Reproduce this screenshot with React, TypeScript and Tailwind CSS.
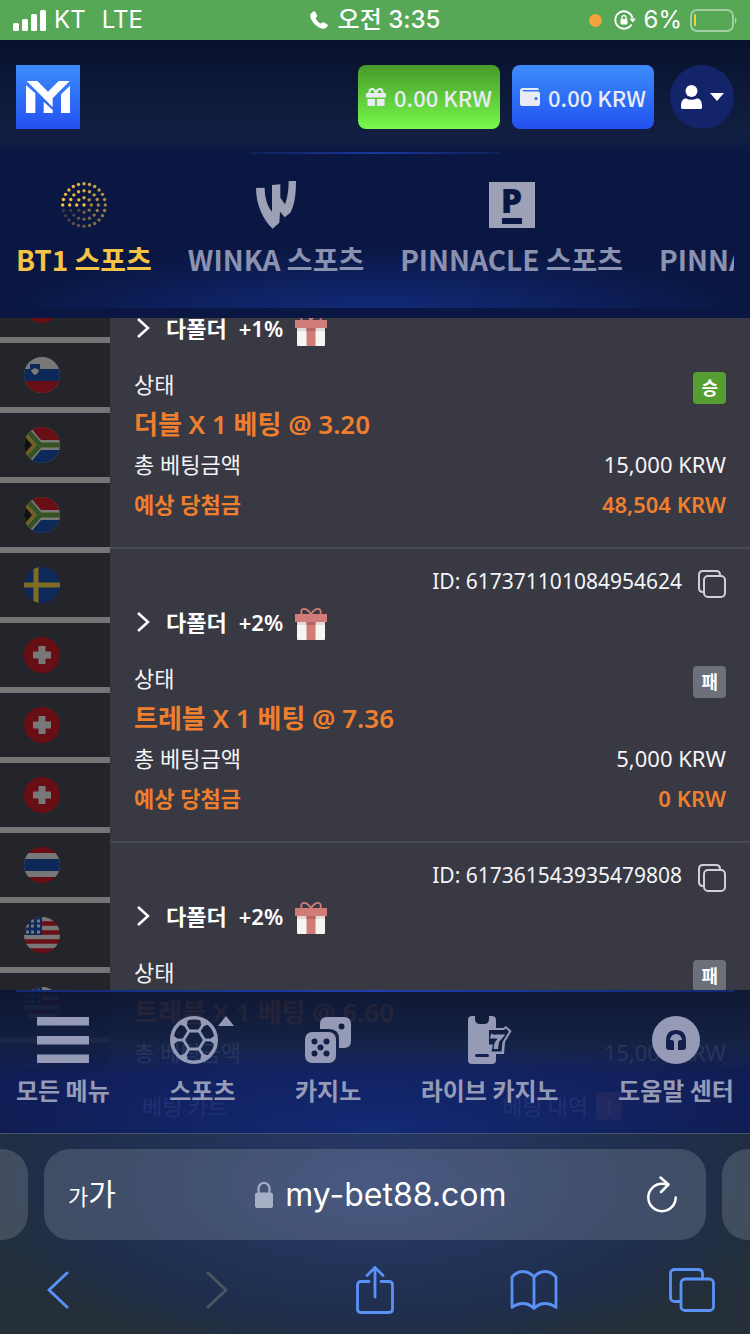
import type { ReactNode } from 'react';

type Bet = {
  id: string;
  bonus: string;
  title: string;
  stake: string;
  payout: string;
  won: boolean;
};

const bets: Bet[] = [
  { id: '617373820194837712', bonus: '+1%', title: '더블 X 1 베팅 @ 3.20', stake: '15,000 KRW', payout: '48,504 KRW', won: true },
  { id: '617371101084954624', bonus: '+2%', title: '트레블 X 1 베팅 @ 7.36', stake: '5,000 KRW', payout: '0 KRW', won: false },
  { id: '617361543935479808', bonus: '+2%', title: '트레블 X 1 베팅 @ 6.60', stake: '15,000 KRW', payout: '0 KRW', won: false },
];

const countries = ['red', 'si', 'za', 'za', 'se', 'ch', 'ch', 'ch', 'th', 'us', 'us', 'us'];

function Flag({ code }: { code: string }) {
  return (
    <svg viewBox="0 0 36 36" className="size-9 rounded-full brightness-50">
      <rect width="36" height="36" fill={code === 'za' || code === 'si' ? '#f0f0f0' : '#d01c2a'} />
      {code === 'si' && (
        <>
          <path d="M0 12H36V24H0Z" fill="#1a52b0" />
          <path d="M0 24H36V36H0Z" fill="#d01c2a" />
          <path d="M6 7H16V12Q16 17 11 18Q6 17 6 12Z" fill="#1a52b0" />
          <path d="M7 13L11 11L15 13Q14 17 11 18Q8 17 7 13Z" fill="#f0f0f0" />
        </>
      )}
      {code === 'za' && (
        <>
          <path d="M6 0H36V13H17Z" fill="#d01c2a" />
          <path d="M6 36H36V23H17Z" fill="#1a52b0" />
          <path d="M-2 4L10 18L-2 32" fill="#222" stroke="#e8b93c" strokeWidth="3" />
          <path d="M1 1L16 18H36M1 35L16 18" fill="none" stroke="#6da544" strokeWidth="5" />
        </>
      )}
      {code === 'se' && (
        <>
          <rect width="36" height="36" fill="#1a52b0" />
          <path d="M12 0V36M0 18H36" stroke="#ffda44" strokeWidth="5" />
        </>
      )}
      {code === 'ch' && <path d="M18 9V27M9 18H27" stroke="#f0f0f0" strokeWidth="7" />}
      {code === 'th' && (
        <>
          <path d="M0 6H36V30H0Z" fill="#f0f0f0" />
          <path d="M0 12H36V24H0Z" fill="#1a52b0" />
        </>
      )}
      {code === 'us' && (
        <>
          <path d="M0 2H36M0 11H36M0 20H36M0 29H36" stroke="#f0f0f0" strokeWidth="4.5" />
          <rect width="18" height="18" fill="#1a52b0" />
          <path d="M13 4h3M7 4h3M2 9h3M7 9h3M13 9h3M2 15h3M7 15h3M13 15h3" stroke="#f0f0f0" strokeWidth="3" />
        </>
      )}
    </svg>
  );
}

function StatusBar() {
  return (
    <div className="grid h-10 shrink-0 grid-cols-[1fr_auto_1fr] items-center bg-[#56a856] px-3 font-['Inter','Noto_Sans_CJK_KR',sans-serif] text-2xl text-white">
      <div className="flex items-center gap-2">
        <svg viewBox="0 0 34 21" className="h-[21px] w-[34px]" fill="#fff">
          <rect x="1" y="13" width="6" height="8" rx="1.5" />
          <rect x="10" y="9" width="6" height="12" rx="1.5" />
          <rect x="19" y="4" width="6" height="17" rx="1.5" />
          <rect x="28" y="0" width="6" height="21" rx="1.5" />
        </svg>
        <span>KT</span>
        <span className="ml-2">LTE</span>
      </div>
      <div className="flex items-center gap-2.5">
        <svg viewBox="0 0 18 18" className="size-[18px]" fill="#fff">
          <path d="M1 2.5 3 .7C4 0 5 .3 5.500 1.300L7 4.300C7.300 5.200 7 5.700 6.200 6.500 5.500 7.200 5.700 7.700 6.500 9 7.600 10.600 8.800 11.600 10 12.300 10.800 12.700 11.200 12.500 11.900 11.700 12.500 11 13.200 11 14 11.400L17 13.300C18 14 18 14.800 17.300 15.600 15.700 17.500 14 18.300 11.500 17.500 6 15.700 1.500 10.500.300 6 0 4.500.200 3.300 1 2.500Z" />
        </svg>
        <span className="font-medium">오전 3:35</span>
      </div>
      <div className="flex items-center justify-end gap-2">
        <span className="mr-1 size-[13px] rounded-full bg-[#f2a33c]" />
        <svg viewBox="0 0 22 20" className="h-5 w-[22px]" fill="none" stroke="#fff" strokeWidth="1.800">
          <path d="M17.500 14.500A8.700 8.700 0 1 1 18.500 8" />
          <path d="M15.500 8.500H22L18.700 12.500Z" fill="#fff" stroke="none" />
          <rect x="6.500" y="9" width="7" height="5.500" rx="1" fill="#fff" stroke="none" />
          <path d="M8 9V7.500A2 2 0 0 1 12 7.500V9" strokeWidth="1.300" />
        </svg>
        <span>6%</span>
        <svg viewBox="0 0 48 23" className="h-[23px] w-12">
          <rect x="1" y="1" width="42" height="21" rx="6" fill="none" stroke="#fff" strokeOpacity=".45" strokeWidth="2" />
          <rect x="4" y="5" width="2" height="12" rx="1" fill="#f7ce46" />
          <path d="M45 8Q48 11.500 45 15Z" fill="#fff" fillOpacity=".5" />
        </svg>
      </div>
    </div>
  );
}

function Header() {
  return (
    <header className="flex h-28 shrink-0 items-center bg-linear-to-b from-[#08122e] via-[#121f42] via-85% to-[#0b1844] px-4 pt-0.5">
      <a href="#" aria-label="MY" className="mr-auto size-16 bg-linear-to-b from-[#3f8bfb] to-[#2450f0]">
        <svg viewBox="0 0 192 192" fill="#fff">
          <path d="M30 61 58 85V144H30ZM32 48H64L96 80 128 48H161L110 100V127ZM83 110 110 135V144H83ZM162 62V144H135V88Z" />
        </svg>
      </a>
      <button className="mr-3 flex h-16 items-center gap-2 rounded-lg bg-linear-to-b from-[#479a2b] to-[#78fa4c] px-2 text-[22px] font-medium text-[#e9ebf5]">
        <svg viewBox="0 0 20 18" className="h-[18px] w-5" fill="currentColor">
          <path d="M1 5H19Q20 5 20 6V9.500H0V6Q0 5 1 5ZM1.500 11H9V18H2.500Q1.500 18 1.500 17ZM11 11H18.500V17Q18.500 18 17.500 18H11Z" />
          <path d="M10 5.500C8.500-.500 3-.500 3.500 5M10 5.500C11.500-.500 17-.500 16.500 5" fill="none" stroke="currentColor" strokeWidth="2" />
        </svg>
        0.00 KRW
      </button>
      <button className="mr-4 flex h-16 items-center gap-2 rounded-lg bg-linear-to-b from-[#3f8bfb] to-[#2450f0] px-2 text-[22px] font-medium text-[#e9ebf5]">
        <svg viewBox="0 0 20 18" className="h-[18px] w-5" fill="currentColor">
          <path d="M3 0H17Q19 0 19 2H3.500Q2.500 2 2.500 2.600T3.500 3.500H18Q20 3.500 20 5.500V16Q20 18 18 18H2Q0 18 0 16V3Q0 0 3 0Z" />
          <circle cx="16" cy="10.500" r="1.500" fill="#2f6bf5" />
        </svg>
        0.00 KRW
      </button>
      <button aria-label="계정" className="flex size-16 items-center justify-center gap-2 rounded-full bg-[#13246a]">
        <svg viewBox="0 0 21 24" className="h-6 w-[21px]" fill="#fff">
          <circle cx="10.500" cy="6" r="6" />
          <path d="M0 21C0 16 2 13.500 5 13.500Q10.500 16 16 13.500C19 13.500 21 16 21 21V22.500Q21 24 19.500 24H1.500Q0 24 0 22.500Z" />
        </svg>
        <svg viewBox="0 0 14 8" className="h-2 w-3.5" fill="#fff">
          <path d="M0 0H14L7 8Z" />
        </svg>
      </button>
    </header>
  );
}

const rings = [
  { r: 21.300, count: 24 },
  { r: 14.300, count: 16 },
  { r: 7.300, count: 8 },
];

function DotsIcon() {
  return (
    <svg viewBox="-24 -24 48 48" className="size-12" fill="#f5c142">
      <circle r="1.700" />
      {rings.map(({ r, count }) =>
        Array.from({ length: count }, (_, i) => {
          const angle = (i / count) * Math.PI * 2;
          return (
            <circle
              key={`${r}-${i}`}
              cx={-r * Math.cos(angle)}
              cy={-r * Math.sin(angle)}
              r="1.700"
              opacity={1 - 0.85 * Math.pow(i / count, 1.3)}
            />
          );
        })
      )}
    </svg>
  );
}

function WinkaIcon() {
  return (
    <svg viewBox="0 0 120 144" className="h-12 w-10" fill="#9ca1b5">
      <path d="M0 21 26 20C26 50 34 74 48 92V12L73 10V50L87 70C94 52 98 28 98 0L120 0C120 40 116 72 103 95L86 109 72 92 70 125 50 143C20 115 0 70 0 21Z" />
    </svg>
  );
}

function PinnacleIcon() {
  return (
    <span className="flex size-[46px] flex-col items-center gap-1 bg-[#9ca1b5] pt-1 font-['Open_Sans',sans-serif] text-[34px] leading-7 font-extrabold text-[#0a1742]">
      P
      <span className="h-1.5 w-5 bg-[#0a1742]" />
    </span>
  );
}

const providers: { name: string; icon: ReactNode; active?: boolean }[] = [
  { name: 'BT1 스포츠', icon: <DotsIcon />, active: true },
  { name: 'WINKA 스포츠', icon: <WinkaIcon /> },
  { name: 'PINNACLE 스포츠', icon: <PinnacleIcon /> },
  { name: 'PINNACLE 카지노', icon: null },
];

function ProviderTabs() {
  return (
    <nav className="shrink-0 bg-[#0a1743] pb-2.5">
      <div className="mx-auto h-0.5 w-1/3 bg-linear-to-r from-[#10205a] via-[#1b37a0] to-[#10205a]" />
      <div className="bg-[radial-gradient(ellipse_50%_45%_at_50%_105%,#122b7c,#0a1743)] px-4 pt-[27px] pb-[27px]">
        <div className="flex gap-9 overflow-hidden">
          {providers.map((p) => (
            <a key={p.name} href="#" className="flex shrink-0 flex-col items-center gap-2">
              <span className="flex h-12 items-center">{p.icon}</span>
              <span className={`text-[28px] leading-[44px] font-bold whitespace-nowrap ${p.active ? 'text-[#f7c344]' : 'text-[#8b92b0]'}`}>
                {p.name}
              </span>
            </a>
          ))}
        </div>
      </div>
    </nav>
  );
}

function GiftIcon() {
  return (
    <svg viewBox="0 0 32 32" className="size-8">
      <path d="M16 6C11-1 5-.500 6.500 6M16 6C21-1 27-.500 25.500 6" fill="none" stroke="#d27c7a" strokeWidth="1.800" />
      <path d="M2 13H30V31Q30 32 29 32H3Q2 32 2 31Z" fill="#f6f6f0" />
      <path d="M2 13H30V17H2Z" fill="#e2dad6" />
      <path d="M11.500 13H20.500V32H11.500Z" fill="#d27c7a" />
      <path d="M11.500 13H20.500V17H11.500Z" fill="#b56664" />
      <path d="M0 6H32V14H0Z" fill="#d27c7a" />
    </svg>
  );
}

function BetCard({ bet }: { bet: Bet }) {
  return (
    <article className="border-b-2 border-[#464955] px-6 pt-[13px] pb-[23px] font-['Noto_Sans','Noto_Sans_CJK_KR',sans-serif] text-[22px] text-[#f4f4f6]">
      <div className="flex h-10 items-center justify-end gap-4">
        <span className="text-[21px]">ID: {bet.id}</span>
        <button aria-label="복사">
          <svg viewBox="0 0 28 28" className="mt-1 size-7" fill="none" stroke="#d0d1d4" strokeWidth="2">
            <rect x="6" y="6" width="21" height="21" rx="4" />
            <path d="M6 22H5Q1 22 1 18V5Q1 1 5 1H18Q22 1 22 5V6" />
          </svg>
        </button>
      </div>
      <div className="mb-4 flex h-10 items-center gap-3 font-semibold text-white">
        <button className="flex items-center gap-4">
          <svg viewBox="0 0 16 20" className="h-5 w-4" fill="none" stroke="#fff" strokeWidth="2.500">
            <path d="M4 1 14 10 4 19" />
          </svg>
          다폴더
        </button>
        <span>{bet.bonus}</span>
        <span className="pt-1">
          <GiftIcon />
        </span>
      </div>
      <div className="flex h-10 items-center justify-between">
        <span>상태</span>
        <span className={`self-end rounded-sm px-2 text-lg leading-8 font-bold text-white ${bet.won ? 'bg-[#559e2f]' : 'bg-[#6d6f79]'}`}>
          {bet.won ? '승' : '패'}
        </span>
      </div>
      <div className="text-[26px] leading-10 font-semibold text-[#ee7f2f]">{bet.title}</div>
      <div className="flex justify-between leading-10">
        <span>총 베팅금액</span>
        <span>{bet.stake}</span>
      </div>
      <div className="flex justify-between leading-10 font-semibold text-[#ee7f2f]">
        <span>예상 당첨금</span>
        <span>{bet.payout}</span>
      </div>
    </article>
  );
}

function MenuIcon() {
  return (
    <svg viewBox="0 0 52 48" className="h-12 w-[52px]" fill="currentColor">
      <path d="M0 1H52V9.500H0ZM0 20H52V28.500H0ZM0 38.500H52V47H0Z" />
    </svg>
  );
}

function BallIcon() {
  return (
    <svg viewBox="-24 -24 48 48" className="size-12" fill="none" stroke="currentColor" strokeWidth="2.800">
      <circle r="22.200" strokeWidth="3.600" />
      <path d="M-5-9H5L10.500 0 5 9H-5L-10.500 0Z" strokeLinejoin="round" />
      {[0, 60, 120, 180, 240, 300].map((deg) => (
        <g key={deg} transform={`rotate(${deg})`}>
          <path d="M10.500 0H20" />
          <path d="M15 0 21-5V5Z" fill="currentColor" stroke="none" />
        </g>
      ))}
    </svg>
  );
}

function DiceIcon() {
  return (
    <svg viewBox="0 0 46 46" className="my-px size-[46px]" fill="currentColor">
      <path d="M15 12V7Q15 0 22 0H39Q46 0 46 7V24Q46 31 39 31H34V22Q34 12 24 12ZM36.500 6.500A3 3 0 1 0 36.600 12.500 3 3 0 0 0 36.500 6.500Z" fillRule="evenodd" />
      <rect y="15" width="31" height="31" rx="7" />
      <g fill="#122048">
        <circle cx="9.500" cy="24.500" r="3" />
        <circle cx="21.500" cy="24.500" r="3" />
        <circle cx="15.500" cy="30.500" r="3" />
        <circle cx="9.500" cy="36.500" r="3" />
        <circle cx="21.500" cy="36.500" r="3" />
      </g>
    </svg>
  );
}

function LiveIcon() {
  return (
    <svg viewBox="0 0 44 48" className="h-12 w-11" fill="currentColor">
      <path d="M4 0H7V3Q7 8 12 8H16Q21 8 21 3V0H24Q28 0 28 4V44Q28 48 24 48H4Q0 48 0 44V4Q0 0 4 0Z" />
      <rect x="7" y="38" width="14" height="3" rx="1.500" fill="#122154" />
      <path d="M22 12H35L38 10 43.500 15 37 26 36 38H24V30Z" />
      <path d="M21 14H35.500L38 12.500 41 15.500 34.500 26 33.500 35.500H23.500L25 28.500H21Z" fill="#122048" />
      <path d="M23 17.500Q25 19 28 18.500H36.500L37 19 31 26 30 33H25.500L26.500 27 29.500 22.500H22Z" />
    </svg>
  );
}

function HelpIcon() {
  return (
    <svg viewBox="0 0 48 48" className="size-12">
      <circle cx="24" cy="24" r="24" fill="currentColor" />
      <path d="M14 25Q14 14 24 14T34 25V31Q34 34 31 34H26V26Q26 24 28.500 24H30Q29 18 24 18T18 24H19.500Q22 24 22 26V34H17Q14 34 14 31Z" fill="#141f4e" />
    </svg>
  );
}

const menu = [
  { label: '모든 메뉴', icon: <MenuIcon /> },
  { label: '스포츠', icon: <BallIcon />, expandable: true },
  { label: '카지노', icon: <DiceIcon /> },
  { label: '라이브 카지노', icon: <LiveIcon /> },
  { label: '도움말 센터', icon: <HelpIcon /> },
];

function BottomMenu() {
  return (
    <nav className="absolute inset-x-0 bottom-0 bg-[radial-gradient(ellipse_60%_70%_at_50%_100%,#16359490,#16359400),linear-gradient(#0b1532e6,#122046e6_40%,#0e1c5ae6_60%,#0d1a50e6)]">
      <div className="mx-4 h-0.5 bg-linear-to-r from-[#12296f] via-[#1f3fb0] to-[#12296f]" />
      <div className="flex justify-between px-4 pt-6 pb-[25px] text-[#959bb6]">
        {menu.map((m) => (
          <a key={m.label} href="#" className="flex flex-col items-center gap-2">
            <span className="flex items-start">
              {m.icon}
              {m.expandable && (
                <svg viewBox="0 0 16 10" className="h-2.5 w-4" fill="currentColor">
                  <path d="M8 0 16 10H0Z" />
                </svg>
              )}
            </span>
            <span className="text-2xl leading-9 font-bold">{m.label}</span>
          </a>
        ))}
      </div>
    </nav>
  );
}

function BrowserChrome() {
  return (
    <footer className="shrink-0 border-t border-[#46536b] bg-[radial-gradient(ellipse_55%_90%_at_50%_25%,#283c6c,#1f2e4c_75%,#1f2c3800),linear-gradient(#212e40,#242f38)] pt-[15px] pb-5 font-['Inter','Noto_Sans_CJK_KR',sans-serif] text-white">
      <div className="flex h-[91px] gap-4">
        <div className="w-7 rounded-r-[26px] bg-white/15" />
        <div className="flex flex-1 items-center justify-between rounded-[26px] bg-white/15 pr-7 pl-6">
          <button aria-label="텍스트 크기" className="flex items-baseline">
            <span className="text-[22px]">가</span>
            <span className="text-3xl">가</span>
          </button>
          <button className="flex items-center gap-3 text-[32px]">
            <svg viewBox="0 0 18 26" className="h-[26px] w-[18px]" fill="#a7afc4">
              <rect y="10.500" width="18" height="15.500" rx="2.500" />
              <path d="M3.500 11V6.500A5.500 5.500 0 0 1 14.500 6.500V11" fill="none" stroke="#a7afc4" strokeWidth="2.200" />
            </svg>
            my-bet88.com
          </button>
          <button aria-label="새로고침">
            <svg viewBox="0 0 32 37" className="h-[37px] w-8" fill="none" stroke="#fff" strokeWidth="2.500" strokeLinecap="round" strokeLinejoin="round">
              <path d="M21 8.500C19 7.800 17.500 7.800 16 7.800A13.700 13.700 0 1 0 29.700 21.500" />
              <path d="M14.500 1.500 22.500 8.500 15 16" />
            </svg>
          </button>
        </div>
        <div className="w-7 rounded-l-[26px] bg-white/15" />
      </div>
      <div className="flex justify-between px-[34px] pt-[26px] text-[#5a91f7]">
        <button aria-label="뒤로" className="flex size-12 items-center justify-center">
          <svg viewBox="0 0 22 38" className="h-[38px] w-[22px]" fill="none" stroke="currentColor" strokeWidth="3" strokeLinecap="round" strokeLinejoin="round">
            <path d="M20 2 2 19 20 36" />
          </svg>
        </button>
        <button aria-label="앞으로" className="flex size-12 items-center justify-center text-[#4b5563]">
          <svg viewBox="0 0 22 38" className="h-[38px] w-[22px]" fill="none" stroke="currentColor" strokeWidth="3" strokeLinecap="round" strokeLinejoin="round">
            <path d="M2 2 20 19 2 36" />
          </svg>
        </button>
        <button aria-label="공유" className="flex size-12 items-center justify-center">
          <svg viewBox="0 0 38 48" className="h-12 w-[38px]" fill="none" stroke="currentColor" strokeWidth="2.800" strokeLinecap="round" strokeLinejoin="round">
            <path d="M13 15.500H5Q1.500 15.500 1.500 19V43Q1.500 46.500 5 46.500H33Q36.500 46.500 36.500 43V19Q36.500 15.500 33 15.500H25M19 31V1.500M11 9.500 19 1.500 27 9.500" />
          </svg>
        </button>
        <button aria-label="책갈피" className="flex size-12 items-center justify-center">
          <svg viewBox="0 0 48 40" className="h-10 w-12" fill="none" stroke="currentColor" strokeWidth="2.800" strokeLinejoin="round">
            <path d="M24 7Q19 1.500 13 1.500T2 7V37.500Q7 33.500 13 33.500T24 38.500Q29 33.500 35 33.500T46 37.500V7Q41 1.500 35 1.500T24 7V38" />
          </svg>
        </button>
        <button aria-label="탭" className="flex size-12 items-center justify-center">
          <svg viewBox="0 0 46 44" className="h-11 w-[46px]" fill="none" stroke="currentColor" strokeWidth="2.800">
            <rect x="12" y="11" width="32.500" height="31.500" rx="4" />
            <path d="M12 33.500H6Q1.500 33.500 1.500 29.500V5.500Q1.500 1.500 6 1.500H29Q33.500 1.500 33.500 5.500V11" />
          </svg>
        </button>
      </div>
    </footer>
  );
}

export default function App() {
  return (
    <div className="flex h-screen flex-col overflow-hidden bg-[#0a1743] font-['Noto_Sans_CJK_KR',sans-serif]">
      <StatusBar />
      <Header />
      <ProviderTabs />
      <main className="relative flex min-h-0 flex-1 bg-[#24252a]">
        <aside className="mb-[67px] w-[110px] shrink-0 overflow-hidden">
          <div className="-mt-[45px]">
            {countries.map((code, i) => (
              <div key={i} className="flex h-[70px] items-center border-b-6 border-[#757575] pl-6">
                <Flag code={code} />
              </div>
            ))}
          </div>
        </aside>
        <section className="flex min-w-0 flex-1 flex-col bg-[#383943]">
          <div className="min-h-0 flex-1 overflow-hidden">
            <div className="-mt-[63px]">
              {bets.map((bet) => (
                <BetCard key={bet.id} bet={bet} />
              ))}
            </div>
          </div>
          <div className="flex h-[67px] shrink-0 items-center justify-between bg-[#24252a] pt-3 pr-32 pl-8 text-[22px] text-[#dfe1ea]">
            <button>베팅 카트</button>
            <button className="flex items-center gap-2">
              베팅 내역
              <span className="rounded-sm bg-[#ee7f2f] px-2 text-lg leading-7 text-white">1</span>
            </button>
          </div>
        </section>
        <BottomMenu />
      </main>
      <BrowserChrome />
    </div>
  );
}
